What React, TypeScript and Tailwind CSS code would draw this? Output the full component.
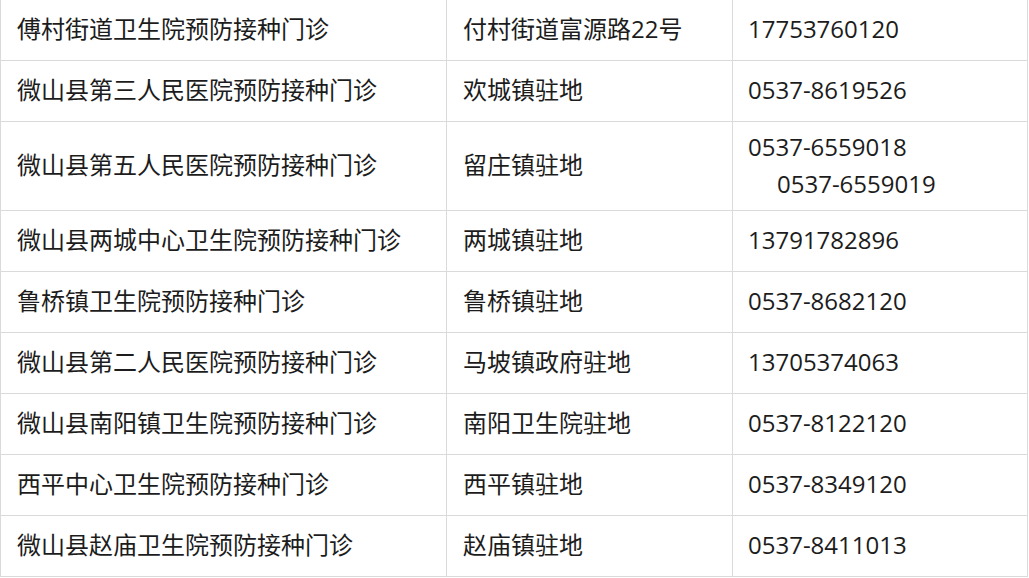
const rows: { name: string; place: string; phone: string[]; tall?: boolean }[] = [
  { name: '傅村街道卫生院预防接种门诊', place: '付村街道富源路22号', phone: ['17753760120'] },
  { name: '微山县第三人民医院预防接种门诊', place: '欢城镇驻地', phone: ['0537-8619526'] },
  { name: '微山县第五人民医院预防接种门诊', place: '留庄镇驻地', phone: ['0537-6559018', '0537-6559019'], tall: true },
  { name: '微山县两城中心卫生院预防接种门诊', place: '两城镇驻地', phone: ['13791782896'] },
  { name: '鲁桥镇卫生院预防接种门诊', place: '鲁桥镇驻地', phone: ['0537-8682120'] },
  { name: '微山县第二人民医院预防接种门诊', place: '马坡镇政府驻地', phone: ['13705374063'] },
  { name: '微山县南阳镇卫生院预防接种门诊', place: '南阳卫生院驻地', phone: ['0537-8122120'] },
  { name: '西平中心卫生院预防接种门诊', place: '西平镇驻地', phone: ['0537-8349120'] },
  { name: '微山县赵庙卫生院预防接种门诊', place: '赵庙镇驻地', phone: ['0537-8411013'] },
];

export default function App() {
  return (
    <div
      className="w-[1029px] h-[578px] overflow-hidden bg-white text-[24px] text-[#1c1c1c]"
      style={{ fontFamily: '"Open Sans", "Noto Sans CJK SC", sans-serif' }}
    >
      <div className="grid grid-cols-[446px_286px_295px] border-l border-[#dadada] w-[1028px]">
        {rows.map((r, i) => {
          const h = r.tall ? 'h-[89px]' : 'h-[61px]';
          const cell = `${h} border-r border-b border-[#dadada] flex items-center pl-4`;
          return (
            <div key={i} className="contents">
              <div className={`${cell} pb-[3px]`}>
                <span className="leading-none">{r.name}</span>
              </div>
              <div className={`${cell} pb-[3px]`}>
                <span className="leading-none">{r.place}</span>
              </div>
              <div className={`${cell} pl-[15px] pb-[3px]`}>
                <div className="flex flex-col">
                  {r.phone.map((p, j) => (
                    <span key={j} className={`leading-[37px] ${j > 0 ? 'pl-[29px]' : ''}`}>
                      {p}
                    </span>
                  ))}
                </div>
              </div>
            </div>
          );
        })}
      </div>
    </div>
  );
}
